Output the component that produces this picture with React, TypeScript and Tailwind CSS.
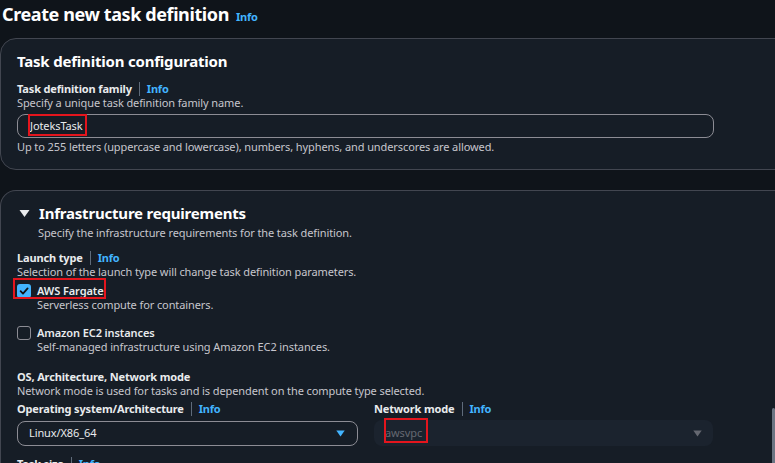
import React from "react";

function Info() {
  return <span className="text-[11px] font-bold tracking-[-0.2px] text-[#42b4ff]">Info</span>;
}

function Label({ text }: { text: string }) {
  return (
    <div className="flex items-center text-[11px] font-bold leading-[16px] tracking-[-0.15px] text-[#e9ebed]">
      <span>{text}</span>
      <span className="mx-[7px] h-[14px] w-px bg-[#5f6b7a]" />
      <Info />
    </div>
  );
}

function Check({ checked }: { checked: boolean }) {
  if (checked) {
    return (
      <span className="flex h-[14px] w-[14px] shrink-0 items-center justify-center rounded-[3px] bg-[#42b4ff]">
        <svg width="10" height="10" viewBox="0 0 10 10">
          <path d="M1.6 5.2 L4 7.6 L8.6 2.4" fill="none" stroke="#0f141a" strokeWidth="1.8" strokeLinecap="round" strokeLinejoin="round" />
        </svg>
      </span>
    );
  }
  return <span className="h-[14px] w-[14px] shrink-0 rounded-[3px] border border-[#8c8c94]" />;
}

export default function App() {
  return (
    <div
      className="relative h-[463px] w-[775px] overflow-hidden bg-[#0f141a] text-[#e9ebed]"
      style={{ fontFamily: '"Noto Sans", "Open Sans", sans-serif' }}
    >
      <div className="flex items-baseline gap-[7px] pl-[2px] pt-[2px]">
        <h1 className="text-[18px] font-bold leading-[24px] tracking-[-0.4px] text-white">Create new task definition</h1>
        <Info />
      </div>

      {/* Task definition configuration */}
      <div className="mt-[12px] w-[800px] rounded-l-[16px] border border-[#424650] bg-[#161d26] px-[16px] pb-[15px] pt-[11px]">
        <h2 className="text-[15px] font-bold leading-[22px] tracking-[-0.2px] text-white">Task definition configuration</h2>
        <div className="mt-[9px]">
          <Label text="Task definition family" />
          <div className="text-[11px] leading-[12px] tracking-[-0.1px] text-[#c6c6cd]">Specify a unique task definition family name.</div>
          <div className="relative mt-[5px] flex h-[24px] w-[697px] items-center rounded-[8px] border border-[#8c8c94] pl-[12px] text-[11px] tracking-[-0.1px]">
            <span>JoteksTask</span>
            <span className="absolute -top-[1px] left-[10px] h-[22px] w-[59px] border-2 border-[#e4151d]" />
          </div>
          <div className="mt-[2px] text-[11px] leading-[14px] tracking-[-0.1px] text-[#c6c6cd]">
            Up to 255 letters (uppercase and lowercase), numbers, hyphens, and underscores are allowed.
          </div>
        </div>
      </div>

      {/* Infrastructure requirements */}
      <div className="mt-[20px] w-[800px] rounded-tl-[16px] border border-b-0 border-[#424650] bg-[#161d26] px-[16px] pt-[11px]">
        <div className="flex items-center gap-[9px]">
          <svg width="11" height="9" viewBox="0 0 11 9" className="ml-[2px]">
            <path d="M0.5 1 L10.5 1 L5.5 8 Z" fill="#e9ebed" />
          </svg>
          <h2 className="text-[15px] font-bold leading-[22px] tracking-[-0.2px] text-white">Infrastructure requirements</h2>
        </div>
        <div className="mt-[2px] pl-[21px] text-[11px] leading-[14px] tracking-[-0.1px] text-[#c6c6cd]">
          Specify the infrastructure requirements for the task definition.
        </div>

        <div className="mt-[10px]">
          <Label text="Launch type" />
          <div className="text-[11px] leading-[12px] tracking-[-0.1px] text-[#c6c6cd]">
            Selection of the launch type will change task definition parameters.
          </div>

          <div className="mt-[6px]">
            <div className="relative flex items-center gap-[6px]">
              <Check checked />
              <span className="text-[11px] font-semibold leading-[14px] tracking-[-0.1px]">AWS Fargate</span>
              <span className="absolute -left-[4px] -top-[6px] h-[21px] w-[93px] border-2 border-[#e4151d]" />
            </div>
            <div className="pl-[20px] text-[11px] leading-[14px] tracking-[-0.1px] text-[#c6c6cd]">Serverless compute for containers.</div>
          </div>

          <div className="mt-[14px]">
            <div className="flex items-center gap-[6px]">
              <Check checked={false} />
              <span className="text-[11px] font-semibold leading-[14px] tracking-[-0.1px]">Amazon EC2 instances</span>
            </div>
            <div className="pl-[20px] text-[11px] leading-[14px] tracking-[-0.1px] text-[#c6c6cd]">
              Self-managed infrastructure using Amazon EC2 instances.
            </div>
          </div>
        </div>

        <div className="mt-[15px]">
          <div className="text-[11px] font-bold leading-[16px] tracking-[-0.15px]">OS, Architecture, Network mode</div>
          <div className="text-[11px] leading-[12px] tracking-[-0.1px] text-[#c6c6cd]">
            Network mode is used for tasks and is dependent on the compute type selected.
          </div>
          <div className="mt-[4px] flex gap-[16px]">
            <div className="w-[341px]">
              <Label text="Operating system/Architecture" />
              <div className="mt-[4px] flex h-[25px] items-center justify-between rounded-[8px] border border-[#8c8c94] pl-[11px] pr-[12px] text-[11px] tracking-[-0.1px]">
                <span>Linux/X86_64</span>
                <svg width="9" height="7" viewBox="0 0 9 7">
                  <path d="M0.3 0.5 L8.7 0.5 L4.5 6.5 Z" fill="#42b4ff" />
                </svg>
              </div>
            </div>
            <div className="w-[339px]">
              <Label text="Network mode" />
              <div className="relative mt-[3px] flex h-[26px] items-center justify-between rounded-[8px] bg-[#1b232e] pl-[11px] pr-[11px] text-[11px] tracking-[-0.1px] text-[#656871]">
                <span>awsvpc</span>
                <svg width="9" height="7" viewBox="0 0 9 7">
                  <path d="M0.3 0.5 L8.7 0.5 L4.5 6.5 Z" fill="#656871" />
                </svg>
                <span className="absolute -top-[2px] left-[10px] h-[25px] w-[44px] border-2 border-[#e4151d]" />
              </div>
            </div>
          </div>
          <div className="mt-[10px]">
            <Label text="Task size" />
          </div>
        </div>
      </div>

      <div className="absolute right-0 top-[408px] h-[60px] w-[3px] rounded-t-[2px] bg-[#6b7583]" />
    </div>
  );
}
